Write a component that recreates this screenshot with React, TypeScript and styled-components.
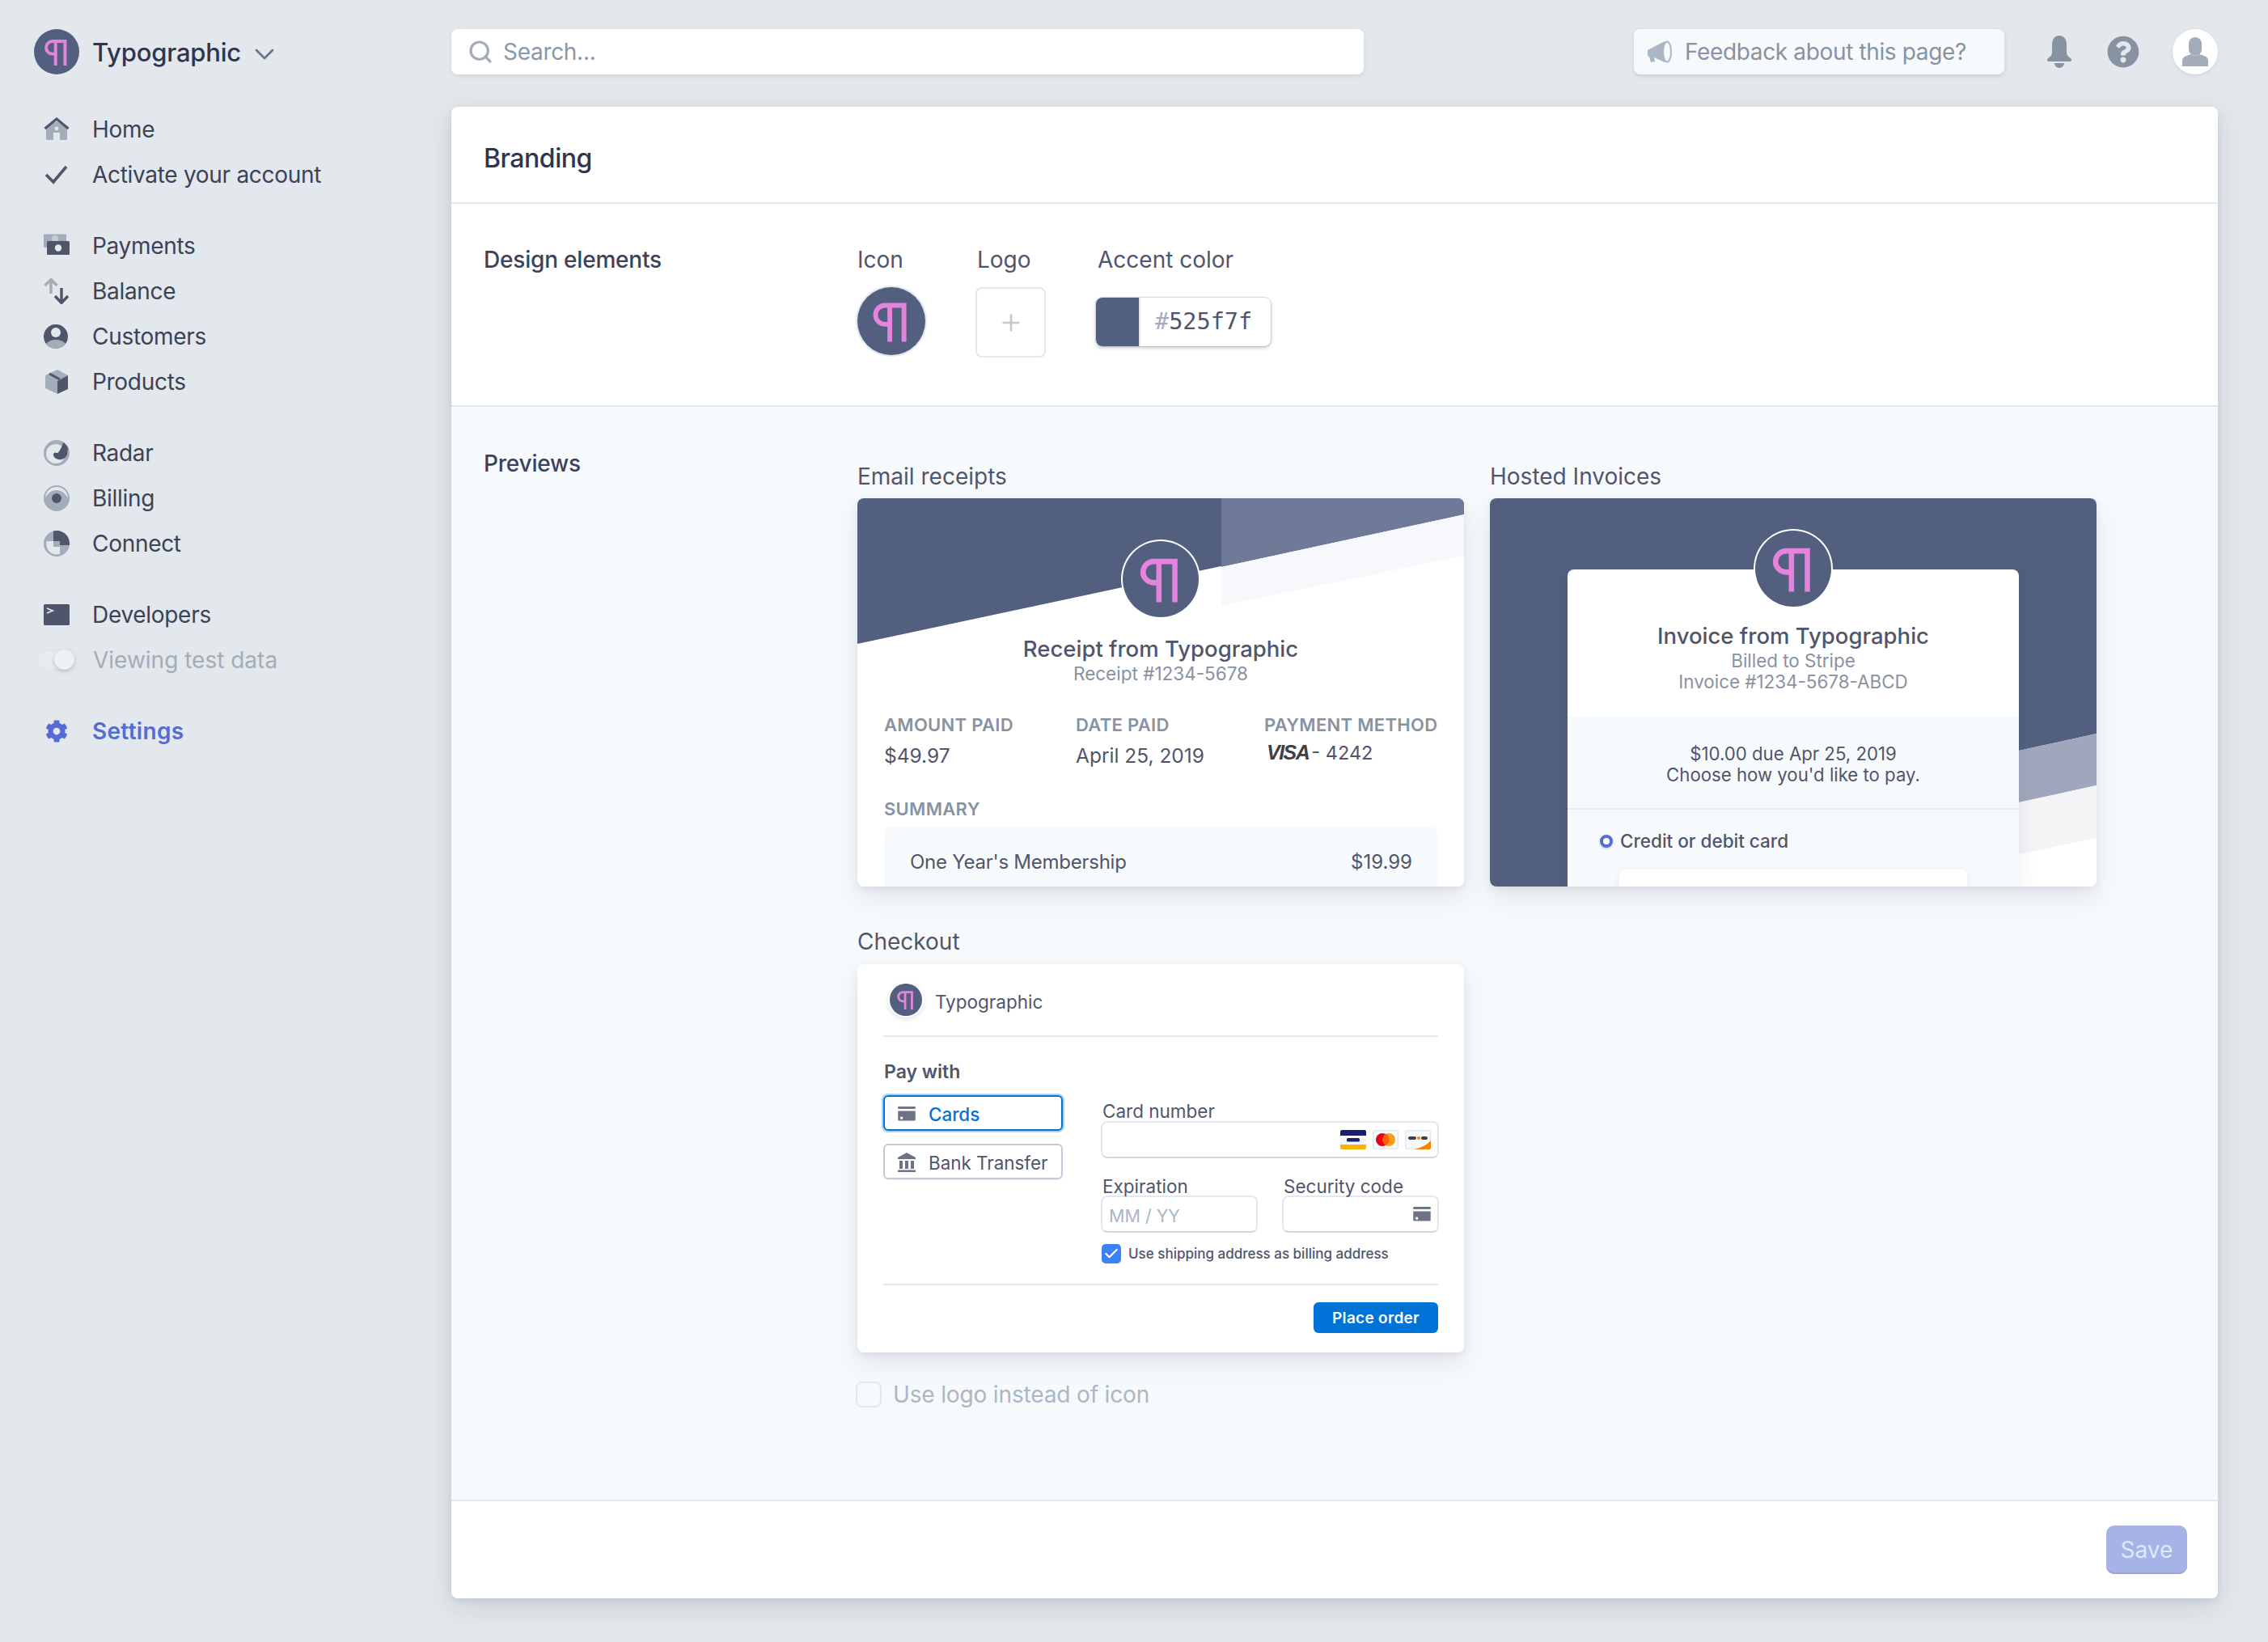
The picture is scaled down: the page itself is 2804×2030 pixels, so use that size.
import styled, { createGlobalStyle } from 'styled-components';
import { Search, Plus, ChevronDown, Check } from 'lucide-react';
import { FaCog, FaQuestionCircle } from 'react-icons/fa';

const dark = '#4f566b';
const light = '#a3acb9';
const ink = '#3c4257';
const accent = '#525f7f';
const canvas = '#e3e8ec';

const GlobalStyle = createGlobalStyle`
  html, body { margin: 0; padding: 0; }
  body { background: ${canvas}; font-family: Inter, "Noto Sans", sans-serif; color: ${ink}; }
  * { box-sizing: border-box; }
`;

const Page = styled.div`
  width: 2804px;
  height: 2030px;
  display: grid;
  grid-template-columns: 558px 2184px;
  overflow: hidden;
`;

const Sidebar = styled.aside`
  display: flex;
  flex-direction: column;
`;

const Brand = styled.div`
  height: 132px;
  padding: 36px 0 0 42px;
  display: flex;
  align-items: flex-start;
  gap: 16px;
  font-size: 31px;
  font-weight: 500;
  line-height: 58px;
  letter-spacing: -0.2px;
  color: #2f3450;
  svg.chev { margin: 11px 0 0 -7px; color: #697386; }
`;

const NavGroup = styled.nav`
  display: flex;
  flex-direction: column;
  margin-bottom: 32px;
`;

const NavRow = styled.div<{ $active?: boolean; $muted?: boolean }>`
  height: 56px;
  display: flex;
  align-items: center;
  padding-left: 54px;
  gap: 28px;
  font-size: 28px;
  letter-spacing: ${p => (p.$active ? '0.3px' : p.$muted ? '0' : '-0.3px')};
  font-weight: ${p => (p.$active ? 600 : 400)};
  color: ${p => (p.$active ? '#556cd6' : p.$muted ? light : ink)};
  svg { flex: none; }
`;

const SettingsGlyph = styled(FaCog)`
  margin: 0 2px;
`;

const Toggle = styled.span`
  width: 46px;
  height: 26px;
  margin: 0 -5px 0 -8px;
  flex: none;
  border-radius: 13px;
  background: #e6ebf0;
  box-shadow: inset 0 0 0 1px #dde2e8;
  position: relative;
  &::after {
    content: '';
    position: absolute;
    right: 0;
    top: 0;
    width: 25px;
    height: 25px;
    border-radius: 50%;
    background: #edf0f4;
    box-shadow: 0 2px 5px rgba(60, 66, 87, 0.25);
  }
`;

const Main = styled.main`
  display: flex;
  flex-direction: column;
`;

const TopBar = styled.header`
  height: 132px;
  padding-top: 36px;
  display: flex;
  align-items: flex-start;
`;

const SearchBox = styled.div`
  width: 1128px;
  height: 56px;
  background: #fff;
  border-radius: 8px;
  display: flex;
  align-items: center;
  gap: 12px;
  padding-left: 20px;
  font-size: 28px;
  letter-spacing: -0.3px;
  color: #8898aa;
  box-shadow: 0 2px 5px rgba(60, 66, 87, 0.12);
`;

const Feedback = styled.div`
  width: 458px;
  height: 56px;
  margin-left: 334px;
  background: #f7fafc;
  border-radius: 8px;
  display: flex;
  align-items: center;
  gap: 15px;
  padding-left: 16px;
  font-size: 28px;
  letter-spacing: -0.36px;
  color: #8792a2;
  box-shadow: 0 2px 5px rgba(60, 66, 87, 0.16);
`;

const TopIcons = styled.div`
  height: 56px;
  margin-left: 52px;
  display: flex;
  align-items: center;
  gap: 43px;
`;

const UserBubble = styled.div`
  width: 56px;
  height: 56px;
  margin-left: -2px;
  border-radius: 50%;
  background: #fff;
  display: flex;
  align-items: center;
  justify-content: center;
  box-shadow: 0 2px 5px rgba(60, 66, 87, 0.1);
`;

const Panel = styled.section`
  height: 1844px;
  background: #fff;
  border-radius: 8px;
  overflow: hidden;
`;

const PanelShadow = styled.div`
  border-radius: 8px;
  box-shadow: 0 10px 34px rgba(60, 66, 87, 0.14), 0 3px 8px rgba(60, 66, 87, 0.1);
`;

const PanelHead = styled.div`
  height: 120px;
  padding: 44px 0 0 40px;
  font-size: 32px;
  line-height: 40px;
  font-weight: 500;
  letter-spacing: -0.45px;
  color: #2f3450;
  border-bottom: 2px solid #e3e8ee;
`;

const SectionRow = styled.div<{ $tinted?: boolean }>`
  display: grid;
  grid-template-columns: 462px 1fr;
  padding: ${p => (p.$tinted ? '50px 0 114px 40px' : '51px 0 59px 40px')};
  background: ${p => (p.$tinted ? '#f7fafc' : '#fff')};
  border-bottom: 2px solid #e3e8ee;
`;

const SectionTitle = styled.h3<{ $drop?: number }>`
  margin: ${p => p.$drop ?? 0}px 0 0;
  font-size: 28px;
  line-height: 36px;
  font-weight: 500;
  letter-spacing: -0.2px;
`;

const FieldLabel = styled.div`
  font-size: 28px;
  line-height: 32px;
  color: ${dark};
`;

const DesignFields = styled.div`
  display: flex;
  margin-left: -2px;
  ${FieldLabel} { padding-left: 2px; margin: 2px 0 18px; }
`;

const DesignField = styled.div<{ $w?: number }>`
  width: ${p => (p.$w ? `${p.$w}px` : 'auto')};
`;

const AvatarCircle = styled.div<{ $size: number; $ring?: string; $lift?: boolean }>`
  width: ${p => p.$size}px;
  height: ${p => p.$size}px;
  flex: none;
  border-radius: 50%;
  background: ${accent};
  display: flex;
  align-items: center;
  justify-content: center;
  box-shadow: ${p => (p.$ring ? `0 0 0 2px ${p.$ring}` : 'none')}${p => (p.$lift ? ', 0 3px 8px rgba(60, 66, 87, 0.2)' : '')};
  position: relative;
`;

const IconPreview = styled(AvatarCircle)`
  margin: 2px 0 0 2px;
`;

const LogoDrop = styled.div`
  width: 87px;
  height: 87px;
  border: 2px solid #e3e8ee;
  border-radius: 8px;
  display: flex;
  align-items: center;
  justify-content: center;
  color: #c1c9d2;
`;

const ColorField = styled.div`
  width: 216px;
  height: 60px;
  margin-top: 31px;
  display: flex;
  border-radius: 8px;
  overflow: hidden;
  background: #fff;
  box-shadow: 0 0 0 1px rgba(60, 66, 87, 0.16), 0 2px 5px rgba(60, 66, 87, 0.3);
`;

const Swatch = styled.div`
  width: 55px;
  background: ${accent};
  border-right: 2px solid #e3e8ee;
`;

const HexValue = styled.div`
  padding-left: 18px;
  font-family: "DejaVu Sans Mono", "Liberation Mono", monospace;
  font-size: 28.5px;
  line-height: 60px;
  color: ${dark};
  span { color: ${light}; }
`;

const PreviewColumn = styled.div`
  padding-top: 20px;
`;

const PreviewGrid = styled.div`
  display: grid;
  grid-template-columns: 750px 750px;
  gap: 32px;
`;

const PreviewLabel = styled(FieldLabel)`
  margin-bottom: 11px;
`;

const PreviewCard = styled.div`
  position: relative;
  width: 750px;
  height: 480px;
  background: #fff;
  border-radius: 8px;
  overflow: hidden;
`;

const ShadowWrap = styled.div`
  border-radius: 8px;
  box-shadow: 0 14px 30px rgba(60, 66, 87, 0.1), 0 4px 10px rgba(60, 66, 87, 0.08);
`;

const CardArt = styled.svg`
  position: absolute;
  inset: 0;
`;

const ReceiptBody = styled.div`
  position: relative;
  padding: 53px 33px 0;
  display: flex;
  flex-direction: column;
`;

const CenteredAvatar = styled.div`
  align-self: center;
  display: flex;
  justify-content: center;
`;

const ReceiptTitle = styled.div`
  margin-top: 21px;
  margin-bottom: 1px;
  text-align: center;
  font-size: 27.5px;
  line-height: 36px;
  font-weight: 500;
  color: ${dark};
`;

const ReceiptSub = styled.div`
  text-align: center;
  font-size: 22.5px;
  line-height: 24px;
  color: #8792a2;
`;

const MetaGrid = styled.div`
  margin-top: 37px;
  display: grid;
  grid-template-columns: 237px 233px 1fr;
`;

const MetaHead = styled.div`
  font-size: 22px;
  line-height: 28px;
  font-weight: 600;
  letter-spacing: 0.3px;
  white-space: nowrap;
  color: #8792a2;
`;

const MetaValue = styled.div<{ $up?: boolean }>`
  margin-top: ${p => (p.$up ? 4 : 8)}px;
  font-size: ${p => (p.$up ? 23.5 : 24.5)}px;
  line-height: 32px;
  color: ${dark};
`;

const VisaMark = styled.span`
  font-family: "Liberation Sans", sans-serif;
  font-style: italic;
  font-weight: 700;
  font-size: 25px;
  letter-spacing: -1.5px;
  margin: 0 3px;
  color: #3f3f46;
`;

const SummaryHead = styled(MetaHead)`
  margin-top: 36px;
`;

const SummaryBox = styled.div`
  margin-top: 8px;
  padding: 28px 31px 28px 32px;
  background: #f7fafc;
  border-radius: 8px;
  display: flex;
  justify-content: space-between;
  font-size: 24px;
  line-height: 32px;
  color: ${dark};
  span:first-child { letter-spacing: -0.25px; }
`;

const InvoiceBody = styled.div`
  position: relative;
  margin: 88px 0 0 96px;
  width: 558px;
  height: 392px;
  background: #fff;
  border-radius: 8px 8px 0 0;
  box-shadow: 0 8px 24px rgba(60, 66, 87, 0.1);
`;

const InvoiceTop = styled.div`
  display: flex;
  flex-direction: column;
  height: 182px;
  text-align: center;
`;

const InvoiceAvatar = styled(CenteredAvatar)`
  margin-top: -48px;
`;

const InvoiceTitle = styled.div`
  margin-top: 19px;
  margin-bottom: 1px;
  font-size: 27.5px;
  line-height: 34px;
  font-weight: 500;
  color: ${dark};
`;

const InvoiceSub = styled.div`
  font-size: 22.4px;
  line-height: 26px;
  color: #8792a2;
`;

const InvoiceDue = styled.div`
  padding: 33px 0 28px;
  background: #f7fafc;
  text-align: center;
  font-size: 22.2px;
  line-height: 26px;
  border-bottom: 2px solid #e8ecf1;
  color: ${dark};
`;

const InvoicePay = styled.div`
  height: 96px;
  background: #f7fafc;
  padding: 25px 0 0 40px;
`;

const RadioRow = styled.div`
  display: flex;
  align-items: center;
  gap: 9px;
  font-size: 22.5px;
  line-height: 28px;
  font-weight: 500;
  color: ${dark};
`;

const Radio = styled.span`
  width: 16px;
  height: 16px;
  border-radius: 50%;
  border: 4px solid #556cd6;
  background: #fff;
  box-shadow: 0 1px 3px rgba(60, 66, 87, 0.3);
`;

const CardInputStub = styled.div`
  width: 430px;
  height: 80px;
  margin: 21px 0 0 24px;
  background: #fff;
  border-radius: 8px;
  box-shadow: 0 2px 8px rgba(60, 66, 87, 0.08);
`;

const CheckoutLabel = styled(FieldLabel)`
  margin: 52px 0 12px;
`;

const CheckoutCard = styled.div`
  width: 750px;
  padding: 24px 32px;
  background: #fff;
  border-radius: 8px;
  box-shadow: 0 14px 30px rgba(60, 66, 87, 0.1), 0 4px 10px rgba(60, 66, 87, 0.08);
`;

const CheckoutHead = styled.div`
  display: flex;
  align-items: center;
  gap: 16px;
  padding: 0 0 24px 8px;
  border-bottom: 2px solid #e3e8ee;
  font-size: 22.5px;
  color: ${dark};
  span { padding-top: 5px; }
`;

const PayWith = styled.div`
  margin-top: 29px;
  padding-left: 1px;
  font-size: 23px;
  line-height: 28px;
  font-weight: 600;
  color: ${dark};
`;

const PayGrid = styled.div`
  margin-top: 15px;
  display: grid;
  grid-template-columns: 222px 418px;
  column-gap: 47px;
`;

const MethodColumn = styled.div`
  display: flex;
  flex-direction: column;
  gap: 16px;
`;

const MethodButton = styled.div<{ $on?: boolean }>`
  height: 44px;
  display: flex;
  align-items: center;
  gap: 16px;
  padding: 2px 0 0 16px;
  border-radius: 6px;
  border: 2px solid ${p => (p.$on ? '#0073d6' : '#c4c9d8')};
  box-shadow: ${p => (p.$on ? '0 0 0 2px #a9d2ee' : '0 1px 1px rgba(60, 66, 87, 0.08)')};
  font-size: 22.4px;
  font-weight: ${p => (p.$on ? 500 : 400)};
  color: ${p => (p.$on ? '#0073d6' : dark)};
`;

const CardFields = styled.div`
  padding-top: 8px;
`;

const SmallLabel = styled.div`
  padding-left: 2px;
  font-size: 22.5px;
  line-height: 24px;
  color: ${dark};
`;

const Input = styled.div`
  height: 46px;
  padding: 0 8px;
  border: 2px solid #e3e8ee;
  border-bottom-color: #d5d8e0;
  border-radius: 8px;
  display: flex;
  align-items: center;
  justify-content: flex-end;
  gap: 8px;
`;

const SplitFields = styled.div`
  margin-top: 23px;
  display: grid;
  grid-template-columns: 194px 194px;
  justify-content: space-between;
  ${SmallLabel} { line-height: 23px; }
`;

const Placeholder = styled.span`
  margin: 3px auto 0 0;
  font-size: 21.5px;
  color: #aab7c4;
`;

const BillingCheck = styled.div`
  margin-top: 14px;
  display: flex;
  align-items: center;
  gap: 9px;
  padding-left: 1px;
  font-size: 17px;
  line-height: 24px;
  font-weight: 500;
  white-space: nowrap;
  color: ${dark};
`;

const BlueBox = styled.span`
  width: 24px;
  height: 24px;
  border-radius: 5px;
  background: #3b82f6;
  color: #fff;
  display: flex;
  align-items: center;
  justify-content: center;
`;

const CheckoutFoot = styled.div`
  margin-top: 25px;
  padding-top: 21px;
  border-top: 2px solid #e3e8ee;
  display: flex;
  justify-content: flex-end;
`;

const PlaceOrder = styled.div`
  width: 154px;
  height: 38px;
  border-radius: 6px;
  background: #0073d6;
  color: #fff;
  font-size: 19px;
  line-height: 40px;
  font-weight: 600;
  text-align: center;
  letter-spacing: 0.3px;
`;

const LogoOption = styled.div`
  margin: 36px 0 0 -2px;
  display: flex;
  align-items: center;
  gap: 14px;
  font-size: 28px;
  letter-spacing: -0.15px;
  line-height: 32px;
  color: #aab7c4;
`;

const EmptyBox = styled.span`
  width: 32px;
  height: 32px;
  border-radius: 8px;
  border: 2px solid #e3e8ee;
  background: #f7fafc;
`;

const PanelFoot = styled.div`
  height: 120px;
  padding: 30px 38px 0 0;
  display: flex;
  justify-content: flex-end;
`;

const SaveButton = styled.div`
  width: 100px;
  height: 60px;
  border-radius: 10px;
  background: #a7b3e6;
  box-shadow: inset 0 -2px 0 #9aa5d8;
  color: #dce8fd;
  font-size: 28px;
  line-height: 60px;
  text-align: center;
`;

// the pilcrow mark, drawn on an 86 unit grid
const Pilcrow = ({ size }: { size: number }) => (
  <svg width={size} height={size} viewBox="0 0 86 86" fill="none" stroke="#e583de" strokeWidth="6">
    <path d="M59 69V23H35a12 12 0 0 0 0 24h6M41 23V69" />
  </svg>
);

const HomeIcon = () => (
  <svg width="32" height="32" viewBox="0 0 32 32">
    <path d="M3 14v14a1 1 0 0 0 1 1h8v-9h8v9h8a1 1 0 0 0 1-1V14L16 6z" fill={light} />
    <circle cx="16" cy="15" r="2.4" fill={canvas} />
    <path d="M1.5 15 16 3l14.500 12" fill="none" stroke={dark} strokeWidth="3.200" />
  </svg>
);

const CheckIcon = () => (
  <svg width="32" height="32" viewBox="0 0 32 32" fill="none" stroke={dark} strokeWidth="3.600">
    <path d="M3 16l9 9L28 6" />
  </svg>
);

const PaymentsIcon = () => (
  <svg width="32" height="32" viewBox="0 0 32 32">
    <path d="M0 2.500a1 1 0 0 1 1-1h26a1 1 0 0 1 1 1V18H1a1 1 0 0 1-1-1z" fill={light} />
    <circle cx="14" cy="7" r="4" fill="#c7cdd6" />
    <rect x="4" y="10" width="28" height="17" rx="1.500" fill={dark} />
    <circle cx="18" cy="18.500" r="4.200" fill={canvas} />
  </svg>
);

const BalanceIcon = () => (
  <svg width="32" height="32" viewBox="0 0 32 32" fill="none" strokeWidth="3.400">
    <path d="M9 19V2M1.500 9 9 1.500 16.500 9" stroke={light} />
    <path d="M22 12v19M14 22l8 8.500 8-8.500" stroke={dark} />
  </svg>
);

const CustomersIcon = () => (
  <svg width="32" height="32" viewBox="0 0 32 32">
    <circle cx="15" cy="16" r="15" fill={dark} />
    <circle cx="15" cy="11" r="6" fill={canvas} />
    <path d="M15 20c-5 0-9 1.500-12 5a15 15 0 0 0 24 0c-3-3.500-7-5-12-5z" fill={light} />
  </svg>
);

const ProductsIcon = () => (
  <svg width="32" height="32" viewBox="0 0 32 32">
    <path d="M2 8 17 1l13 7-13 7z" fill={light} />
    <path d="M2 8l15 7v16L2 24z" fill={light} />
    <path d="M17 15l13-7v17l-13 6z" fill={dark} />
    <path d="M7 6l13 7" stroke={dark} strokeWidth="3" />
  </svg>
);

const RadarIcon = () => (
  <svg width="32" height="34" viewBox="0 0 32 34">
    <circle cx="16" cy="17" r="16" fill={light} />
    <circle cx="15" cy="18" r="12" fill={canvas} />
    <path d="M24 4c3 2 5 4 6 7l-1 8c-2 5-7 7-11 6-4-1-6-3-6-6 0-2 2-3 3-2 2 0 3 0 4-2 2-3 4-6 5-11z" fill={dark} />
  </svg>
);

const BillingIcon = () => (
  <svg width="32" height="34" viewBox="0 0 32 34">
    <circle cx="16" cy="17" r="16" fill={light} />
    <path d="M16 3a14 14 0 0 1 14 14c-3-6-8-10-14-10S4 11 2 17A14 14 0 0 1 16 3z" fill={canvas} />
    <circle cx="16" cy="17" r="6" fill={dark} />
  </svg>
);

const ConnectIcon = () => (
  <svg width="32" height="34" viewBox="0 0 32 34">
    <circle cx="16" cy="17" r="16" fill={light} />
    <path d="M12 1.500A16 16 0 0 1 32 17v2H20v-5h-8z" fill={dark} />
    <path d="M12 14v7h8v8.500c-4 2-8 1-11-1S2 21 3.500 14z" fill={canvas} />
  </svg>
);

const DevelopersIcon = () => (
  <svg width="32" height="26" viewBox="0 0 32 26">
    <rect width="32" height="26" rx="1.500" fill={dark} />
    <path d="M4 5l7 3-7 3" fill="none" stroke={canvas} strokeWidth="1.800" />
  </svg>
);

const BellIcon = () => (
  <svg width="32" height="40" viewBox="0 0 32 40" fill="#8792a2">
    <path d="M16 0c6 0 9 5 9 11v10c0 3 2 5 5 7 2 1.500 1 4-1 4H3c-2 0-3-2.500-1-4 3-2 5-4 5-7V11C7 5 10 0 16 0z" />
    <path d="M10 34h12a6 6 0 0 1-12 0z" />
  </svg>
);

const UserIcon = () => (
  <svg width="32" height="36" viewBox="0 0 32 36" fill={light}>
    <rect x="8" y="0" width="16" height="23" rx="8" />
    <path d="M0 36v-7c0-3 2-5 5-6l6-2c2 3 8 3 10 0l6 2c3 1 5 3 5 6v7z" />
  </svg>
);

const MegaphoneIcon = () => (
  <svg width="32" height="28" viewBox="0 0 32 28">
    <path d="M1 12l21-11v26L9 21l1 5-5 1-2-7-2-1z" fill="#aab7c4" />
    <ellipse cx="25" cy="14" rx="5" ry="12.500" fill="#f7fafc" stroke="#aab7c4" strokeWidth="2" />
  </svg>
);

const CardGlyph = ({ w = 22 }: { w?: number }) => (
  <svg width={w} height={w * 0.8} viewBox="0 0 22 18" fill="#6b7385">
    <rect y="0" width="22" height="3" />
    <path d="M0 5.500h22V17a1 1 0 0 1-1 1H1a1 1 0 0 1-1-1z" />
    <rect x="3" y="13" width="3" height="3" fill="#fff" />
  </svg>
);

const BankGlyph = () => (
  <svg width="22" height="24" viewBox="0 0 22 24" fill="#6b7385">
    <path d="M11 0l11 6v2H0V6z" />
    <path d="M2 10h4v10H2zM9 10h4v10H9zM16 10h4v10h-4zM0 21.500h22V24H0z" />
  </svg>
);

const VisaBrand = () => (
  <svg width="32" height="24" viewBox="0 0 32 24">
    <rect width="32" height="24" rx="2" fill="#f4f6f9" />
    <path d="M0 7V2a2 2 0 0 1 2-2h28a2 2 0 0 1 2 2v5z" fill="#1a1f71" />
    <path d="M0 18h32v4a2 2 0 0 1-2 2H2a2 2 0 0 1-2-2z" fill="#f7b600" />
    <rect x="8" y="10" width="16" height="4.500" rx="1.500" fill="#1a1f71" />
  </svg>
);

const MasterBrand = () => (
  <svg width="32" height="24" viewBox="0 0 32 24">
    <rect x="0.750" y="0.750" width="30.500" height="22.500" rx="2" fill="#f7fafc" stroke="#e3e8ee" strokeWidth="1.500" />
    <circle cx="20" cy="12" r="8" fill="#f79e1b" />
    <circle cx="12" cy="12" r="8" fill="#eb001b" />
    <path d="M16 5.100a8 8 0 0 1 0 13.800a8 8 0 0 1 0-13.800z" fill="#ff5f00" />
  </svg>
);

const DiscoverBrand = () => (
  <svg width="32" height="24" viewBox="0 0 32 24">
    <rect x="0.750" y="0.750" width="30.500" height="22.500" rx="2" fill="#f7fafc" stroke="#e3e8ee" strokeWidth="1.500" />
    <path d="M11 24C20 22 28 18 32 13v9a2 2 0 0 1-2 2z" fill="#f58300" />
    <rect x="4" y="8" width="10" height="4" rx="2" fill="#3a3f4a" />
    <rect x="20" y="8" width="8" height="4" rx="2" fill="#3a3f4a" />
    <circle cx="17" cy="10" r="2" fill="#f58300" />
  </svg>
);

const App = () => (
  <Page>
    <GlobalStyle />
    <Sidebar>
      <Brand>
        <AvatarCircle $size={56}>
          <Pilcrow size={56} />
        </AvatarCircle>
        Typographic
        <ChevronDown className="chev" size={40} strokeWidth={1.6} />
      </Brand>
      <NavGroup>
        <NavRow><HomeIcon />Home</NavRow>
        <NavRow><CheckIcon />Activate your account</NavRow>
      </NavGroup>
      <NavGroup>
        <NavRow><PaymentsIcon />Payments</NavRow>
        <NavRow><BalanceIcon />Balance</NavRow>
        <NavRow><CustomersIcon />Customers</NavRow>
        <NavRow><ProductsIcon />Products</NavRow>
      </NavGroup>
      <NavGroup>
        <NavRow><RadarIcon />Radar</NavRow>
        <NavRow><BillingIcon />Billing</NavRow>
        <NavRow><ConnectIcon />Connect</NavRow>
      </NavGroup>
      <NavGroup>
        <NavRow><DevelopersIcon />Developers</NavRow>
        <NavRow $muted><Toggle />Viewing test data</NavRow>
      </NavGroup>
      <NavGroup>
        <NavRow $active><SettingsGlyph size={28} />Settings</NavRow>
      </NavGroup>
    </Sidebar>
    <Main>
      <TopBar>
        <SearchBox>
          <Search size={32} color={light} strokeWidth={2.4} />
          Search...
        </SearchBox>
        <Feedback>
          <MegaphoneIcon />
          Feedback about this page?
        </Feedback>
        <TopIcons>
          <BellIcon />
          <FaQuestionCircle size={40} color="#8792a2" />
          <UserBubble><UserIcon /></UserBubble>
        </TopIcons>
      </TopBar>
      <PanelShadow>
        <Panel>
          <PanelHead>Branding</PanelHead>
          <SectionRow>
            <SectionTitle>Design elements</SectionTitle>
            <DesignFields>
              <DesignField $w={148}>
                <FieldLabel>Icon</FieldLabel>
                <IconPreview $size={84} $ring="#e3e8ee">
                  <Pilcrow size={84} />
                </IconPreview>
              </DesignField>
              <DesignField $w={149}>
                <FieldLabel>Logo</FieldLabel>
                <LogoDrop><Plus size={32} strokeWidth={2} /></LogoDrop>
              </DesignField>
              <DesignField>
                <FieldLabel>Accent color</FieldLabel>
                <ColorField>
                  <Swatch />
                  <HexValue><span>#</span>525f7f</HexValue>
                </ColorField>
              </DesignField>
            </DesignFields>
          </SectionRow>
          <SectionRow $tinted>
            <SectionTitle $drop={2}>Previews</SectionTitle>
            <PreviewColumn>
              <PreviewGrid>
                <div>
                  <PreviewLabel>Email receipts</PreviewLabel>
                  <ShadowWrap>
                    <PreviewCard>
                      <CardArt width="750" height="480" viewBox="0 0 750 480">
                        <path d="M0 0H750V20L0 180z" fill={accent} />
                        <path d="M450 0H750V20L450 85z" fill="#6f7a99" />
                        <path d="M450 85 750 20V71L450 133z" fill="#f7f8fc" />
                      </CardArt>
                      <ReceiptBody>
                        <CenteredAvatar>
                          <AvatarCircle $size={94} $ring="#fff">
                            <Pilcrow size={94} />
                          </AvatarCircle>
                        </CenteredAvatar>
                        <ReceiptTitle>Receipt from Typographic</ReceiptTitle>
                        <ReceiptSub>Receipt #1234-5678</ReceiptSub>
                        <MetaGrid>
                          <div>
                            <MetaHead>AMOUNT PAID</MetaHead>
                            <MetaValue>$49.97</MetaValue>
                          </div>
                          <div>
                            <MetaHead>DATE PAID</MetaHead>
                            <MetaValue>April 25, 2019</MetaValue>
                          </div>
                          <div>
                            <MetaHead>PAYMENT METHOD</MetaHead>
                            <MetaValue $up><VisaMark>VISA</VisaMark>- 4242</MetaValue>
                          </div>
                        </MetaGrid>
                        <SummaryHead>SUMMARY</SummaryHead>
                        <SummaryBox>
                          <span>One Year's Membership</span>
                          <span>$19.99</span>
                        </SummaryBox>
                      </ReceiptBody>
                    </PreviewCard>
                  </ShadowWrap>
                </div>
                <div>
                  <PreviewLabel>Hosted Invoices</PreviewLabel>
                  <ShadowWrap>
                    <PreviewCard>
                      <CardArt width="750" height="480" viewBox="0 0 750 480">
                        <path d="M0 0H750V291L654 312V480H0z" fill={accent} />
                        <path d="M654 312 750 291V355L654 376z" fill="#a0a6bb" />
                        <path d="M654 376 750 355V420L654 440z" fill="#f4f4f7" />
                      </CardArt>
                      <InvoiceBody>
                        <InvoiceTop>
                          <InvoiceAvatar>
                            <AvatarCircle $size={94} $ring="#fff">
                              <Pilcrow size={94} />
                            </AvatarCircle>
                          </InvoiceAvatar>
                          <InvoiceTitle>Invoice from Typographic</InvoiceTitle>
                          <InvoiceSub>Billed to Stripe</InvoiceSub>
                          <InvoiceSub>Invoice #1234-5678-ABCD</InvoiceSub>
                        </InvoiceTop>
                        <InvoiceDue>
                          $10.00 due Apr 25, 2019
                          <br />
                          Choose how you'd like to pay.
                        </InvoiceDue>
                        <InvoicePay>
                          <RadioRow><Radio />Credit or debit card</RadioRow>
                          <CardInputStub />
                        </InvoicePay>
                      </InvoiceBody>
                    </PreviewCard>
                  </ShadowWrap>
                </div>
              </PreviewGrid>
              <CheckoutLabel>Checkout</CheckoutLabel>
              <CheckoutCard>
                <CheckoutHead>
                  <AvatarCircle $size={40} $lift $ring="#fff">
                    <Pilcrow size={40} />
                  </AvatarCircle>
                  <span>Typographic</span>
                </CheckoutHead>
                <PayWith>Pay with</PayWith>
                <PayGrid>
                  <MethodColumn>
                    <MethodButton $on><CardGlyph />Cards</MethodButton>
                    <MethodButton><BankGlyph />Bank Transfer</MethodButton>
                  </MethodColumn>
                  <CardFields>
                    <SmallLabel>Card number</SmallLabel>
                    <Input>
                      <VisaBrand />
                      <MasterBrand />
                      <DiscoverBrand />
                    </Input>
                    <SplitFields>
                      <div>
                        <SmallLabel>Expiration</SmallLabel>
                        <Input><Placeholder>MM / YY</Placeholder></Input>
                      </div>
                      <div>
                        <SmallLabel>Security code</SmallLabel>
                        <Input><CardGlyph /></Input>
                      </div>
                    </SplitFields>
                    <BillingCheck>
                      <BlueBox><Check size={20} strokeWidth={2.6} /></BlueBox>
                      Use shipping address as billing address
                    </BillingCheck>
                  </CardFields>
                </PayGrid>
                <CheckoutFoot>
                  <PlaceOrder>Place order</PlaceOrder>
                </CheckoutFoot>
              </CheckoutCard>
              <LogoOption><EmptyBox />Use logo instead of icon</LogoOption>
            </PreviewColumn>
          </SectionRow>
          <PanelFoot>
            <SaveButton>Save</SaveButton>
          </PanelFoot>
        </Panel>
      </PanelShadow>
    </Main>
  </Page>
);

export default App;
